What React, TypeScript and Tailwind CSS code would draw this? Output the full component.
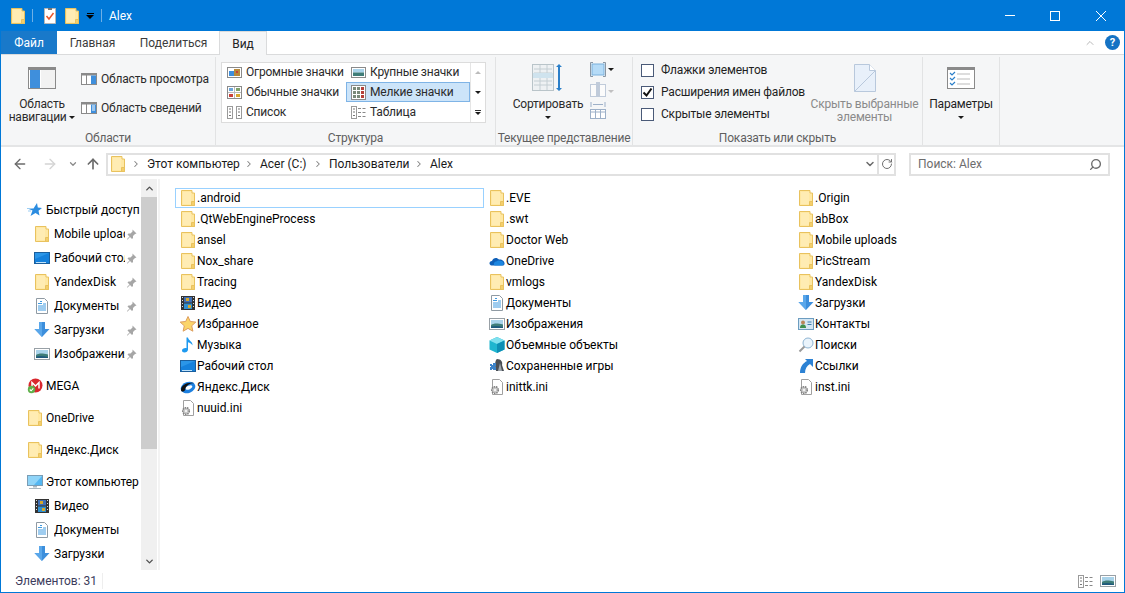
import React from "react";
import { ArrowLeft, ArrowRight, ArrowUp, ChevronDown, ChevronRight, ChevronUp, RotateCw, Search } from "lucide-react";

const FolderIcon = ({ className = "" }: { className?: string }) => (
  <svg width="16" height="16" viewBox="0 0 16 16" className={`shrink-0 ${className}`}>
    <path d="M1.500 .5h10.500v2.500h2.500v12.500h-13z" fill="#ffe8a3" stroke="#e9c25e" />
    <path d="M11.500 15.500v-4h3v4z" fill="#f4cf6c" stroke="#e9c25e" />
    <path d="M3 2h8v12h-8z" fill="#ffecb3" />
  </svg>
);

const VideoIcon = () => (
  <svg width="16" height="16" viewBox="0 0 16 16" className="shrink-0">
    <rect x="1" y="1" width="14" height="14" fill="#333" />
    <rect x="4" y="2" width="8" height="5.500" fill="#3f6fb5" />
    <rect x="4" y="8.500" width="8" height="5.500" fill="#2f8fd0" />
    <rect x="6" y="3" width="3" height="3" fill="#d6a72c" />
    <rect x="8" y="10" width="3" height="3" fill="#d6a72c" />
    <path d="M2 2h1v1h-1zM2 5h1v1h-1zM2 8h1v1h-1zM2 11h1v1h-1zM13 2h1v1h-1zM13 5h1v1h-1zM13 8h1v1h-1zM13 11h1v1h-1z" fill="#ddd" />
  </svg>
);

const DocsIcon = () => (
  <svg width="16" height="16" viewBox="0 0 16 16" className="shrink-0">
    <path d="M2.500 .5h8l3 3v12h-11z" fill="#fff" stroke="#8f9aa3" />
    <path d="M6 3.500h2M4 5.500h4M9 6h3M4 8h8M4 10h8M4 12h8" stroke="#3f9ae0" strokeWidth="1" />
  </svg>
);

const DownloadIcon = () => (
  <svg width="16" height="16" viewBox="0 0 16 16" className="shrink-0">
    <path d="M5 0h6v7h4.500l-7.500 8-7.500-8h4.500z" fill="#3d8fdc" />
    <path d="M5 0h3v15l-7.500-8h4.500z" fill="#5aa7ea" />
  </svg>
);

const PicsIcon = () => (
  <svg width="16" height="16" viewBox="0 0 16 16" className="shrink-0">
    <rect x=".5" y="2.500" width="15" height="11" fill="#fff" stroke="#98a0a6" />
    <rect x="2" y="4" width="12" height="8" fill="#a9d3ea" />
    <path d="M2 9c3-2 6-2 12-.5v3.500h-12z" fill="#3f7d78" />
    <path d="M2 10.500c4-1 8-.5 12 .5v1h-12z" fill="#1f5a7d" />
  </svg>
);

const DesktopIcon = () => (
  <svg width="16" height="16" viewBox="0 0 16 16" className="shrink-0">
    <rect x=".5" y="2.500" width="15" height="11" fill="#2b96e8" stroke="#1a5e9c" />
    <path d="M1 9l14-6v10h-14z" fill="#1581dc" />
    <path d="M2 12.500h10" stroke="#bfe2fa" />
  </svg>
);

const StarIcon = () => (
  <svg width="16" height="16" viewBox="0 0 16 16" className="shrink-0">
    <path d="M8 .5l2.300 5 5.500.6-4.100 3.700 1.200 5.400-4.900-2.800-4.900 2.800 1.200-5.400-4.100-3.700 5.500-.6z" fill="#fbd56a" stroke="#dd9e5f" />
  </svg>
);

const MusicIcon = () => (
  <svg width="16" height="16" viewBox="0 0 16 16" className="shrink-0">
    <path d="M6.500 .5h1.500c.3 3 5 4 4.500 8-.5-1.500-2.500-3-4.500-3.300v7.300c0 2-1.800 3-3.500 3s-2.500-1-2.500-2c0-1.500 2-2.700 4.500-2.300z" fill="#1e9af0" />
  </svg>
);

const YandexIcon = () => (
  <svg width="16" height="16" viewBox="0 0 16 16" className="shrink-0">
    <ellipse cx="8" cy="8.500" rx="7.500" ry="5.500" transform="rotate(-20 8 8.500)" fill="#1d80e0" />
    <path d="M1 11c0-4 5-8 13-7-5 0-8 3-9 7-1 2-4 2-4 0z" fill="#111" />
    <ellipse cx="9" cy="8.500" rx="3.500" ry="1.800" transform="rotate(-25 9 8.500)" fill="#fff" />
  </svg>
);

const IniIcon = () => (
  <svg width="16" height="16" viewBox="0 0 16 16" className="shrink-0">
    <path d="M3.500 .5h7l3 3v12h-10z" fill="#fff" stroke="#a0a0a0" />
    <circle cx="6" cy="11" r="3.300" fill="#c9c9c9" stroke="#808080" strokeDasharray="1.500 .8" strokeWidth="1.500" />
    <circle cx="6" cy="11" r="1" fill="#fff" />
  </svg>
);

const OneDriveIcon = () => (
  <svg width="16" height="16" viewBox="0 0 16 16" className="shrink-0">
    <path d="M2.500 12.500c-3-.5-2.500-4.500.5-4.500 1-3.500 5-4 7-1.500 3-.5 6 2 5.500 4.500-.2 1-1 1.500-2 1.500z" fill="#0e5fb8" />
    <path d="M5.500 12.500c-1.500-2 0-4 2-4 1-1.500 6-1.500 7 1.500.8 1-.2 2.500-1.500 2.500z" fill="#1c86e0" />
  </svg>
);

const CubeIcon = () => (
  <svg width="16" height="16" viewBox="0 0 16 16" className="shrink-0">
    <path d="M8 0l7.500 3.500v9l-7.500 3.500-7.500-3.500v-9z" fill="#1fb5cf" />
    <path d="M8 0l7.500 3.500-7.500 3.500-7.500-3.500z" fill="#7fe0ee" />
    <path d="M8 7l7.500-3.500v9l-7.500 3.500z" fill="#0d8fb5" />
  </svg>
);

const GamesIcon = () => (
  <svg width="16" height="16" viewBox="0 0 16 16" className="shrink-0">
    <path d="M8 1c4 0 6 3 5 6l2 6h-8c0-3-1-4-1-6s1-6 2-6z" fill="#4a4f55" />
    <path d="M11 5l2 8h-4z" fill="#9ea6ad" />
    <path d="M4 5h3v3h-1v1h1v3h-3v-1h-1v1h-2v-3h1v-1h-1v-2h2v1h1z" fill="#3c83c9" />
  </svg>
);

const ContactsIcon = () => (
  <svg width="16" height="16" viewBox="0 0 16 16" className="shrink-0">
    <rect x=".5" y="2.500" width="15" height="11" fill="#d4e6f3" stroke="#6d9dc0" />
    <circle cx="5" cy="6.500" r="2" fill="#b98558" />
    <path d="M2 12c0-3 1.500-3.500 3-3.500s3 .5 3 3.500z" fill="#3f8f4f" />
    <path d="M9.500 6h4M9.500 8.500h4" stroke="#3f7fb0" />
  </svg>
);

const SearchFolderIcon = () => (
  <svg width="16" height="16" viewBox="0 0 16 16" className="shrink-0">
    <circle cx="10" cy="6" r="5" fill="#eaf4fc" stroke="#8fb5d3" />
    <path d="M6.500 9.500l-5 5" stroke="#9a9a9a" strokeWidth="2" />
  </svg>
);

const LinksIcon = () => (
  <svg width="16" height="16" viewBox="0 0 16 16" className="shrink-0">
    <path d="M15 1v8l-3-3c-3 1.500-5 5-5 9h-5c0-6 3-10 7-12l-2-2z" fill="#2c82d4" />
  </svg>
);

const MegaIcon = () => (
  <svg width="16" height="16" viewBox="0 0 16 16" className="shrink-0">
    <circle cx="8.500" cy="7.500" r="7" fill="#d9272e" />
    <path d="M5 10.500v-6l3.500 3.500 3.500-3.500v6" fill="none" stroke="#fff" strokeWidth="1.500" />
    <circle cx="4.500" cy="11.500" r="3.700" fill="#5fb04a" />
    <path d="M2.800 11.500l1.300 1.300 2.200-2.400" fill="none" stroke="#fff" strokeWidth="1.100" />
  </svg>
);

const ComputerIcon = () => (
  <svg width="16" height="16" viewBox="0 0 16 16" className="shrink-0">
    <rect x=".5" y="1.500" width="15" height="10" fill="#54b7f2" stroke="#7a9db5" />
    <path d="M1 2h14l-8 9h-6z" fill="#8fd4f8" />
    <path d="M6 12h4v1.500h-4zM2 14h12v1h-12z" fill="#a9b7c0" />
  </svg>
);

const QuickIcon = () => (
  <svg width="16" height="16" viewBox="0 0 16 16" className="shrink-0">
    <path d="M10 1l.8 4.500 4.200.5-3.500 2.700 1 4.800-4-2.500-5 3 2-5.500-5-2h6z" fill="#2b8ce0" />
    <path d="M0 6.500h5M1 9h3" stroke="#9ccdf3" />
  </svg>
);

const PinIcon = () => (
  <svg width="11" height="11" viewBox="0 0 11 11" className="shrink-0">
    <path d="M6.500 .5l4 4-1.500.5-2 2 0 2-1 1-2-2-2.500 2.500-.5 0 0-.5 2.500-2.500-2-2 1-1 2 0 2-2z" fill="#a6a6a6" />
  </svg>
);

const Caret = () => <span className="inline-block w-0 h-0 border-x-[3px] border-x-transparent border-t-[3px] border-t-[#1a1a1a]" />;

// маленькие значки ленты
const PaneIcon = ({ side }: { side: "preview" | "details" }) => (
  <svg width="16" height="12" viewBox="0 0 16 12" className="shrink-0">
    <rect x=".5" y=".5" width="15" height="11" fill="#fff" stroke="#8a8a8a" />
    <rect x="1" y="1" width="14" height="1.500" fill="#8a8a8a" />
    <path d="M5.500 2v9" stroke="#8a8a8a" />
    <rect x="10" y="2.500" width="5" height="8.500" fill="#3f8fdc" />
    {side === "details" && <path d="M11 4h3M11 6h3M11 8h3" stroke="#fff" />}
  </svg>
);

const Tile = ({ label, selected = false, icon }: { label: string; selected?: boolean; icon: React.ReactNode }) => (
  <div className={`h-5 flex items-center pl-[3px] box-border border ${selected ? "bg-[#cce4f9] border-[#7fb4e6]" : "border-transparent"}`}>
    <span className="w-4 h-4 flex items-center justify-center shrink-0">{icon}</span>
    <span className="ml-1 whitespace-nowrap">{label}</span>
  </div>
);

const HugeIcon = () => (
  <svg width="15" height="11" viewBox="0 0 15 11">
    <rect x=".5" y=".5" width="14" height="10" fill="#fff" stroke="#8a8a8a" />
    <rect x="2" y="4" width="5" height="5" fill="#3f8fdc" />
    <rect x="7" y="2" width="6" height="7" fill="#b98a3a" />
    <rect x="9" y="4" width="2" height="2" fill="#c9403a" />
  </svg>
);
const LargeIcon = () => (
  <svg width="15" height="11" viewBox="0 0 15 11">
    <rect x=".5" y=".5" width="14" height="10" fill="#fff" stroke="#8a8a8a" />
    <rect x="2" y="2" width="11" height="3.500" fill="#a9d3ea" />
    <rect x="2" y="5.500" width="11" height="3.500" fill="#3f7d78" />
  </svg>
);
const NormalIcon = () => (
  <svg width="15" height="13" viewBox="0 0 15 13">
    <rect x=".5" y=".5" width="14" height="12" fill="#fff" stroke="#8a8a8a" />
    <path d="M7.500 1v11M1 6.500h13" stroke="#bbb" />
    <rect x="2" y="2" width="4" height="3" fill="#6ba5dc" />
    <rect x="9" y="2" width="4" height="3" fill="#7ea26a" />
    <rect x="2" y="8" width="4" height="3" fill="#c9403a" />
    <rect x="9" y="8" width="4" height="3" fill="#d6a72c" />
  </svg>
);
const SmallGridIcon = () => (
  <svg width="15" height="15" viewBox="0 0 15 15">
    <rect x=".5" y=".5" width="14" height="14" fill="#fff" stroke="#8a8a8a" />
    {[2, 6, 10].map((y) =>
      [2, 6, 10].map((x) => <rect key={`${x}-${y}`} x={x} y={y} width="3" height="3" fill={x === 10 ? "#b5413a" : "#7a8a7a"} />)
    )}
  </svg>
);
const ListIcon = ({ cols = 2 }: { cols?: number }) => (
  <svg width="15" height="13" viewBox="0 0 15 13">
    <rect x=".5" y=".5" width="5" height="12" fill="#fff" stroke="#9a9a9a" />
    <path d="M2 3h2M2 6h2M2 9.500h2" stroke="#777" />
    {cols === 2 ? (
      <>
        <rect x="9.500" y=".5" width="5" height="12" fill="#fff" stroke="#9a9a9a" />
        <path d="M11 3h2M11 6h2M11 9.500h2" stroke="#777" />
      </>
    ) : (
      <path d="M7 2.500h3M11.500 2.500h3M7 6.500h3M11.500 6.500h3M7 10.500h3M11.500 10.500h3" stroke="#888" />
    )}
  </svg>
);

const CheckRow = ({ label, checked = false }: { label: string; checked?: boolean }) => (
  <div className="h-[22px] flex items-center">
    <span className="w-[13px] h-[13px] border border-[#4a5a78] bg-white flex items-center justify-center shrink-0">
      {checked && (
        <svg width="11" height="11" viewBox="0 0 11 11">
          <path d="M1.500 5.500l3 3 5-7" fill="none" stroke="#111" strokeWidth="2" />
        </svg>
      )}
    </span>
    <span className="ml-[7px] whitespace-nowrap">{label}</span>
  </div>
);

const Group = ({ width, label, children }: { width: string; label: string; children: React.ReactNode }) => (
  <div className={`${width} h-[88px] mt-[2px] border-r border-[#e2e3e4] flex flex-col shrink-0`}>
    <div className="flex-1 flex min-h-0">{children}</div>
    <div className="h-[17px] pt-[2px] text-center text-[#5f5f5f] whitespace-nowrap leading-[16px]">{label}</div>
  </div>
);

const Ribbon = () => (
  <div className="h-[93px] bg-[#f5f6f7] border-t border-[#dadbdc] border-b-2 border-b-[#e4e5e6] flex text-[#2b2b2b] shrink-0 tracking-[-0.2px]">
    <Group width="w-[215px]" label="Области">
      <div className="w-[82px] -mr-[2px] flex flex-col items-center pt-[10px]">
        <svg width="28" height="22" viewBox="0 0 28 22">
          <rect x=".5" y=".5" width="27" height="21" fill="#fff" stroke="#8a8a8a" />
          <rect x="1" y="1" width="26" height="2" fill="#8a8a8a" />
          <rect x="2" y="3" width="10" height="18" fill="#3f8fdc" />
          <rect x="13" y="3" width="14" height="18" fill="#f2f2f2" />
        </svg>
        <div className="mt-[9px] leading-[13px] text-center whitespace-nowrap">
          Область
          <br />
          навигации <span className="inline-flex align-middle"><Caret /></span>
        </div>
      </div>
      <div className="flex flex-col pt-[11px] gap-[7px]">
        <div className="h-[22px] flex items-center gap-1 whitespace-nowrap"><PaneIcon side="preview" />Область просмотра</div>
        <div className="h-[22px] flex items-center gap-1 whitespace-nowrap"><PaneIcon side="details" />Область сведений</div>
      </div>
    </Group>
    <Group width="w-[280px]" label="Структура">
      <div className="ml-[5px] mt-[5px] w-[265px] h-[61px] bg-white border border-[#dcdcdc] flex">
        <div className="w-[124px] -mt-px">
          <Tile label="Огромные значки" icon={<HugeIcon />} />
          <Tile label="Обычные значки" icon={<NormalIcon />} />
          <Tile label="Список" icon={<ListIcon />} />
        </div>
        <div className="w-[124px] -mt-px">
          <Tile label="Крупные значки" icon={<LargeIcon />} />
          <Tile label="Мелкие значки" selected icon={<SmallGridIcon />} />
          <Tile label="Таблица" icon={<ListIcon cols={3} />} />
        </div>
        <div className="flex-1 border-l border-[#e5e5e5] flex flex-col items-center">
          <div className="h-5 flex items-center opacity-40"><span className="inline-block w-0 h-0 border-x-[3px] border-x-transparent border-b-[3px] border-b-[#555]" /></div>
          <div className="h-5 flex items-center"><Caret /></div>
          <div className="h-5 flex flex-col items-center justify-center gap-[1px]"><span className="w-[6px] h-px bg-[#333]" /><Caret /></div>
        </div>
      </div>
    </Group>
    <Group width="w-[137px]" label="Текущее представление">
      <div className="ml-[10px] w-[84px] flex flex-col items-center pt-[6px]">
        <svg width="32" height="30" viewBox="0 0 32 30">
          <rect x=".5" y="1.500" width="21" height="26" fill="#eef1f3" stroke="#b9c4c9" />
          <path d="M2 6h18M2 10h18M2 14h18M2 18h18M2 22h18M8 2v25M15 2v25" stroke="#c4ced3" />
          <rect x="1" y="10" width="20" height="5" fill="#cfe3ee" />
          <path d="M27 2v25" stroke="#2b7fc9" strokeWidth="2" />
          <path d="M24 4l3-3 3 3zM24 25l3 3 3-3z" fill="#2b7fc9" />
        </svg>
        <div className="mt-[5px] leading-[13px] whitespace-nowrap">Сортировать</div>
        <div className="h-[13px] flex items-center"><Caret /></div>
      </div>
      <div className="flex flex-col pt-[4px] gap-[4px]">
        <div className="h-[16px] flex items-center gap-[2px]">
          <svg width="16" height="15" viewBox="0 0 16 15"><path d="M3 .5h-2.500v14h2.500M13 .5h2.500v14h-2.500" fill="none" stroke="#8a96a3" /><rect x="2" y="2" width="12" height="11" fill="#b5dbf7" stroke="#7ab0dc" /></svg>
          <Caret />
        </div>
        <div className="h-[16px] flex items-center gap-[2px] opacity-60">
          <svg width="16" height="16" viewBox="0 0 16 16"><rect x=".5" y="3.500" width="15" height="12" fill="#fff" stroke="#9db0c8" /><rect x="6" y="1" width="4" height="15" fill="#9db0c8" /></svg>
          <span className="opacity-40"><Caret /></span>
        </div>
        <svg width="16" height="18" viewBox="0 0 16 18"><path d="M1 1v5M15 1v5M3 3.500h10" stroke="#9db0c8" /><rect x=".5" y="8.500" width="15" height="9" fill="#fff" stroke="#9db0c8" /><path d="M1 11h14M5.500 9v8M10.500 9v8" stroke="#9db0c8" /></svg>
      </div>
    </Group>
    <Group width="w-[290px]" label="Показать или скрыть">
      <div className="ml-[8px] pt-[2px] w-[166px] text-[#1f1f1f]">
        <CheckRow label="Флажки элементов" />
        <CheckRow label="Расширения имен файлов" checked />
        <CheckRow label="Скрытые элементы" />
      </div>
      <div className="w-[115px] flex flex-col items-center pt-[7px] text-[#8a8a8a]">
        <svg width="22" height="28" viewBox="0 0 22 28">
          <path d="M.5 .5h15l6 6v21h-21z" fill="#e8f0fa" stroke="#b8c8dc" strokeDasharray="0" />
          <path d="M.5 27.500l21-21" stroke="#b8c8dc" />
          <path d="M15.500 .5v6h6" fill="#fff" stroke="#b8c8dc" />
        </svg>
        <div className="mt-[6px] leading-[13px] text-center whitespace-nowrap">
          Скрыть выбранные
          <br />
          элементы
        </div>
      </div>
    </Group>
    <Group width="w-[77px]" label="">
      <div className="w-full flex flex-col items-center pt-[10px] text-[#1f1f1f]">
        <svg width="28" height="22" viewBox="0 0 28 22">
          <rect x=".5" y=".5" width="27" height="21" fill="#fff" stroke="#8a8a8a" />
          <rect x="1" y="1" width="26" height="2" fill="#8a8a8a" />
          <path d="M10 7h13M10 12h13M10 17h13" stroke="#bbb" />
          <path d="M3 6l2 2 3-3M3 11l2 2 3-3M3 16l2 2 3-3" fill="none" stroke="#2b7fc9" strokeWidth="1.200" />
        </svg>
        <div className="mt-[9px] leading-[13px] whitespace-nowrap">Параметры</div>
        <div className="h-[13px] flex items-center"><Caret /></div>
      </div>
    </Group>
  </div>
);

const Crumb = ({ label, width }: { label: string; width: string }) => (
  <>
    <ChevronRight size={10} strokeWidth={2.500} className="text-[#808080] shrink-0 mx-[2px]" />
    <span className={`${width} whitespace-nowrap text-[#1a1a1a] px-[4px]`}>{label}</span>
  </>
);

const AddressBar = () => (
  <div className="h-[32px] pt-[2px] flex items-center shrink-0 bg-white">
    <ArrowLeft size={16} strokeWidth={2} className="ml-[11px] text-[#6b6b6b]" />
    <ArrowRight size={16} strokeWidth={2} className="ml-[14px] text-[#d4d4d4]" />
    <ChevronDown size={10} strokeWidth={3} className="ml-[10px] text-[#8a8a8a]" />
    <ArrowUp size={16} strokeWidth={2.500} className="ml-[7px] text-[#6b6b6b]" />
    <div className="ml-[5px] w-[790px] h-[23px] border-2 border-[#e1e1e1] flex items-center">
      <div className="flex-1 flex items-center pl-[2px]">
        <FolderIcon />
        <ChevronRight size={10} strokeWidth={2.500} className="text-[#808080] shrink-0 ml-[5px] mr-[2px]" />
        <span className="w-[99px] whitespace-nowrap text-[#1a1a1a] px-[4px]">Этот компьютер</span>
        <Crumb label="Acer (C:)" width="w-[55px]" />
        <Crumb label="Пользователи" width="w-[87px]" />
        <Crumb label="Alex" width="w-[40px]" />
      </div>
      <ChevronDown size={12} strokeWidth={3} className="text-[#6b6b6b] mr-[1px]" />
      <div className="w-[17px] h-full border-l-2 border-[#e1e1e1] flex items-center justify-center">
        <RotateCw size={12} strokeWidth={2} className="text-[#707070]" />
      </div>
    </div>
    <div className="ml-[13px] w-[201px] h-[23px] border-2 border-[#e1e1e1] flex items-center justify-between pl-[7px] pr-[6px]">
      <span className="text-[#6d6d6d]">Поиск: Alex</span>
      <Search size={13} strokeWidth={2.500} className="text-[#6b6b6b] -scale-x-100" />
    </div>
  </div>
);

type NavItem = { label: string; icon: React.ReactNode; pin?: boolean };

const pinned: NavItem[] = [
  { label: "Mobile uploads", icon: <FolderIcon />, pin: true },
  { label: "Рабочий стол", icon: <DesktopIcon />, pin: true },
  { label: "YandexDisk", icon: <FolderIcon />, pin: true },
  { label: "Документы", icon: <DocsIcon />, pin: true },
  { label: "Загрузки", icon: <DownloadIcon />, pin: true },
  { label: "Изображения", icon: <PicsIcon />, pin: true },
];

const pcItems: NavItem[] = [
  { label: "Видео", icon: <VideoIcon /> },
  { label: "Документы", icon: <DocsIcon /> },
  { label: "Загрузки", icon: <DownloadIcon /> },
];

const NavHead = ({ label, icon, className = "" }: { label: string; icon: React.ReactNode; className?: string }) => (
  <div className={`h-6 flex items-center pl-[26px] ${className}`}>
    {icon}
    <span className="ml-[3px] whitespace-nowrap">{label}</span>
  </div>
);

const NavRow = ({ label, icon, pin }: NavItem) => (
  <div className="h-6 flex items-center pl-[33px]">
    {icon}
    <span className="ml-[4px] w-[71px] overflow-hidden whitespace-nowrap">{label}</span>
    {pin && <span className="ml-[1px]"><PinIcon /></span>}
  </div>
);

const Sidebar = () => (
  <div className="w-[159px] shrink-0 flex border-r-2 border-[#f3f3f3]">
    <div className="w-[140px] shrink-0 pt-[19px] text-black overflow-hidden">
      <NavHead label="Быстрый доступ" icon={<QuickIcon />} />
      {pinned.map((item) => <NavRow key={item.label} {...item} />)}
      <NavHead label="MEGA" icon={<MegaIcon />} className="mt-2" />
      <NavHead label="OneDrive" icon={<FolderIcon />} className="mt-2" />
      <NavHead label="Яндекс.Диск" icon={<FolderIcon />} className="mt-2" />
      <NavHead label="Этот компьютер" icon={<ComputerIcon />} className="mt-2" />
      {pcItems.map((item) => <NavRow key={item.label} {...item} />)}
    </div>
    <div className="w-[16px] shrink-0 bg-[#f0f0f0] flex flex-col">
      <div className="h-[18px] flex items-center justify-center"><ChevronUp size={11} strokeWidth={3} className="text-[#505050]" /></div>
      <div className="h-[252px] bg-[#cdcdcd]" />
      <div className="flex-1" />
      <div className="h-[18px] flex items-center justify-center"><ChevronDown size={11} strokeWidth={3} className="text-[#505050]" /></div>
    </div>
  </div>
);

const fi = <FolderIcon />;
const files: { name: string; icon: React.ReactNode; selected?: boolean }[] = [
  { name: ".android", icon: fi, selected: true }, { name: ".EVE", icon: fi }, { name: ".Origin", icon: fi },
  { name: ".QtWebEngineProcess", icon: fi }, { name: ".swt", icon: fi }, { name: "abBox", icon: fi },
  { name: "ansel", icon: fi }, { name: "Doctor Web", icon: fi }, { name: "Mobile uploads", icon: fi },
  { name: "Nox_share", icon: fi }, { name: "OneDrive", icon: <OneDriveIcon /> }, { name: "PicStream", icon: fi },
  { name: "Tracing", icon: fi }, { name: "vmlogs", icon: fi }, { name: "YandexDisk", icon: fi },
  { name: "Видео", icon: <VideoIcon /> }, { name: "Документы", icon: <DocsIcon /> }, { name: "Загрузки", icon: <DownloadIcon /> },
  { name: "Избранное", icon: <StarIcon /> }, { name: "Изображения", icon: <PicsIcon /> }, { name: "Контакты", icon: <ContactsIcon /> },
  { name: "Музыка", icon: <MusicIcon /> }, { name: "Объемные объекты", icon: <CubeIcon /> }, { name: "Поиски", icon: <SearchFolderIcon /> },
  { name: "Рабочий стол", icon: <DesktopIcon /> }, { name: "Сохраненные игры", icon: <GamesIcon /> }, { name: "Ссылки", icon: <LinksIcon /> },
  { name: "Яндекс.Диск", icon: <YandexIcon /> }, { name: "inittk.ini", icon: <IniIcon /> }, { name: "inst.ini", icon: <IniIcon /> },
  { name: "nuuid.ini", icon: <IniIcon /> },
];

const FileList = () => (
  <div className="flex-1 pl-[15px] pt-[9px] bg-white">
    <div className="grid grid-cols-[309px_309px_309px] auto-rows-[21px] text-black">
      {files.map((f) => (
        <div key={f.name} className={`flex items-center pl-[5px] h-[20px] border ${f.selected ? "border-[#99d1ff]" : "border-transparent"}`}>
          <span className="-ml-px">{f.icon}</span>
          <span className="ml-[1px] whitespace-nowrap">{f.name}</span>
        </div>
      ))}
    </div>
  </div>
);

export default function App() {
  return (
    <div className="w-[1125px] h-[593px] overflow-hidden bg-white flex flex-col border-x border-b border-[#0078d7] text-[12px] leading-[16px] font-['Roboto',sans-serif]">
      <div className="h-[31px] bg-[#0078d7] flex items-center text-white shrink-0 -mx-px pl-[10px]">
        <FolderIcon />
        <span className="w-px h-[13px] bg-[#6eb0e6] ml-[6px]" />
        <svg width="16" height="16" viewBox="0 0 16 16" className="ml-[9px]">
          <path d="M2.500 .5h11v15h-11z" fill="#fff" stroke="#b8b8b8" />
          <rect x="6" y="0" width="4" height="2" fill="#777" />
          <path d="M4.500 8l2.500 3 4.500-6" fill="none" stroke="#e8552a" strokeWidth="1.500" />
        </svg>
        <FolderIcon className="ml-[6px]" />
        <span className="ml-[6px] flex flex-col items-center gap-[1px]"><span className="w-[7px] h-px bg-black" /><span className="inline-block w-0 h-0 border-x-[4px] border-x-transparent border-t-[4px] border-t-black" /></span>
        <span className="w-px h-[13px] bg-[#6eb0e6] ml-[7px]" />
        <span className="ml-[7px]">Alex</span>
        <div className="ml-auto flex items-center pr-[19px]">
          <span className="w-[10px] h-px bg-white" />
          <span className="ml-[35px] w-[10px] h-[10px] border border-white" />
          <svg width="10" height="10" viewBox="0 0 10 10" className="ml-[36px]"><path d="M0 0l10 10M10 0l-10 10" stroke="#fff" /></svg>
        </div>
      </div>
      <div className="h-[23px] flex items-stretch bg-white shrink-0 text-[#3c3c3c]">
        <div className="w-[56px] bg-[#1979ca] text-white flex items-center justify-center">Файл</div>
        <div className="w-[71px] flex items-center justify-center">Главная</div>
        <div className="w-[91px] flex items-center justify-center whitespace-nowrap">Поделиться</div>
        <div className="w-[48px] h-[24px] border-x border-t border-[#dadbdc] bg-[#f5f6f7] flex items-center justify-center text-[#222] z-10">Вид</div>
        <div className="ml-auto flex items-center pr-[4px]">
          <ChevronUp size={12} strokeWidth={1.500} className="text-[#a0a0a0]" />
          <span className="ml-[9px] w-[15px] h-[15px] rounded-full bg-[#1573c4] text-white font-bold text-[11px] flex items-center justify-center">?</span>
        </div>
      </div>
      <Ribbon />
      <AddressBar />
      <div className="flex-1 flex min-h-0">
        <Sidebar />
        <FileList />
      </div>
      <div className="h-[22px] flex items-center shrink-0 text-[#3c3c5c] bg-white">
        <span className="ml-[14px] w-[88px] border-r border-[#eee] whitespace-nowrap">Элементов: 31</span>
        <div className="ml-auto flex items-center gap-[7px] pr-[8px]">
          <ListIcon cols={3} />
          <PicsIcon />
        </div>
      </div>
    </div>
  );
}
